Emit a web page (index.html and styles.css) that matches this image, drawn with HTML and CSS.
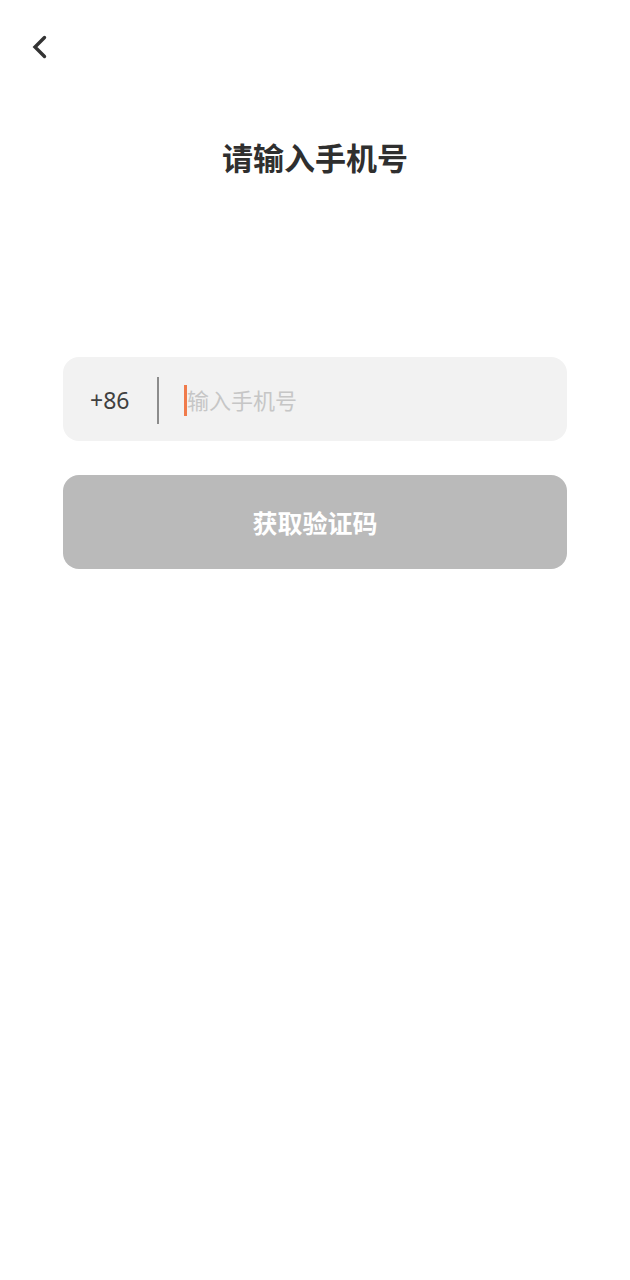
FILE: index.html
```html
<!DOCTYPE html>
<html lang="zh-CN">
<head>
<meta charset="utf-8">
<title>请输入手机号</title>
<link rel="stylesheet" href="styles.css">
</head>
<body>
<div class="app">
  <header class="topbar">
    <svg class="back" width="20" height="30" viewBox="0 0 20 30" aria-label="返回">
      <polyline points="14.5,5.5 5,15 14.5,24.5" fill="none" stroke="#333" stroke-width="3.4" stroke-linecap="round" stroke-linejoin="miter"/>
    </svg>
  </header>
  <h1 class="title">请输入手机号</h1>
  <main class="form">
    <div class="phone-field">
      <span class="code">+86</span>
      <span class="divider"></span>
      <span class="cursor"></span>
      <span class="placeholder">输入手机号</span>
    </div>
    <button class="submit" type="button">获取验证码</button>
  </main>
</div>
</body>
</html>
```

FILE: styles.css
```css
html, body {
  margin: 0;
  padding: 0;
  background: #ffffff;
}
body {
  font-family: "Noto Sans", "Noto Sans CJK SC", sans-serif;
  color: #333333;
}
.app {
  width: 630px;
  min-height: 1280px;
}
.topbar {
  height: 94px;
  box-sizing: border-box;
  padding: 32px 0 0 30px;
}
.back {
  display: block;
}
.title {
  margin: 41px 0 0;
  height: 44px;
  line-height: 44px;
  text-align: center;
  font-family: "Noto Sans CJK SC", sans-serif;
  font-size: 31px;
  font-weight: 700;
  color: #2f2f2f;
}
.form {
  margin-top: 178px;
  padding: 0 63px;
  display: flex;
  flex-direction: column;
  gap: 34px;
}
.phone-field {
  height: 84px;
  border-radius: 16px;
  background: #f2f2f2;
  display: flex;
  align-items: center;
  padding-left: 27px;
}
.code {
  font-size: 23px;
  color: #404040;
  width: 40px;
  margin-top: 2px;
}
.divider {
  width: 2px;
  height: 47px;
  background: #8c8c8c;
  margin-left: 27px;
  margin-top: 2px;
}
.cursor {
  width: 3px;
  height: 31px;
  background: #f07b4b;
  margin-left: 25px;
  margin-top: 2px;
}
.placeholder {
  font-family: "Noto Sans CJK SC", sans-serif;
  font-size: 22px;
  color: #c6c6c6;
  margin-top: 0;
}
.submit {
  height: 94px;
  border: none;
  border-radius: 16px;
  background: #bababa;
  color: #ffffff;
  font-family: "Noto Sans CJK SC", sans-serif;
  font-size: 25px;
  font-weight: 700;
  padding: 0;
}
```
